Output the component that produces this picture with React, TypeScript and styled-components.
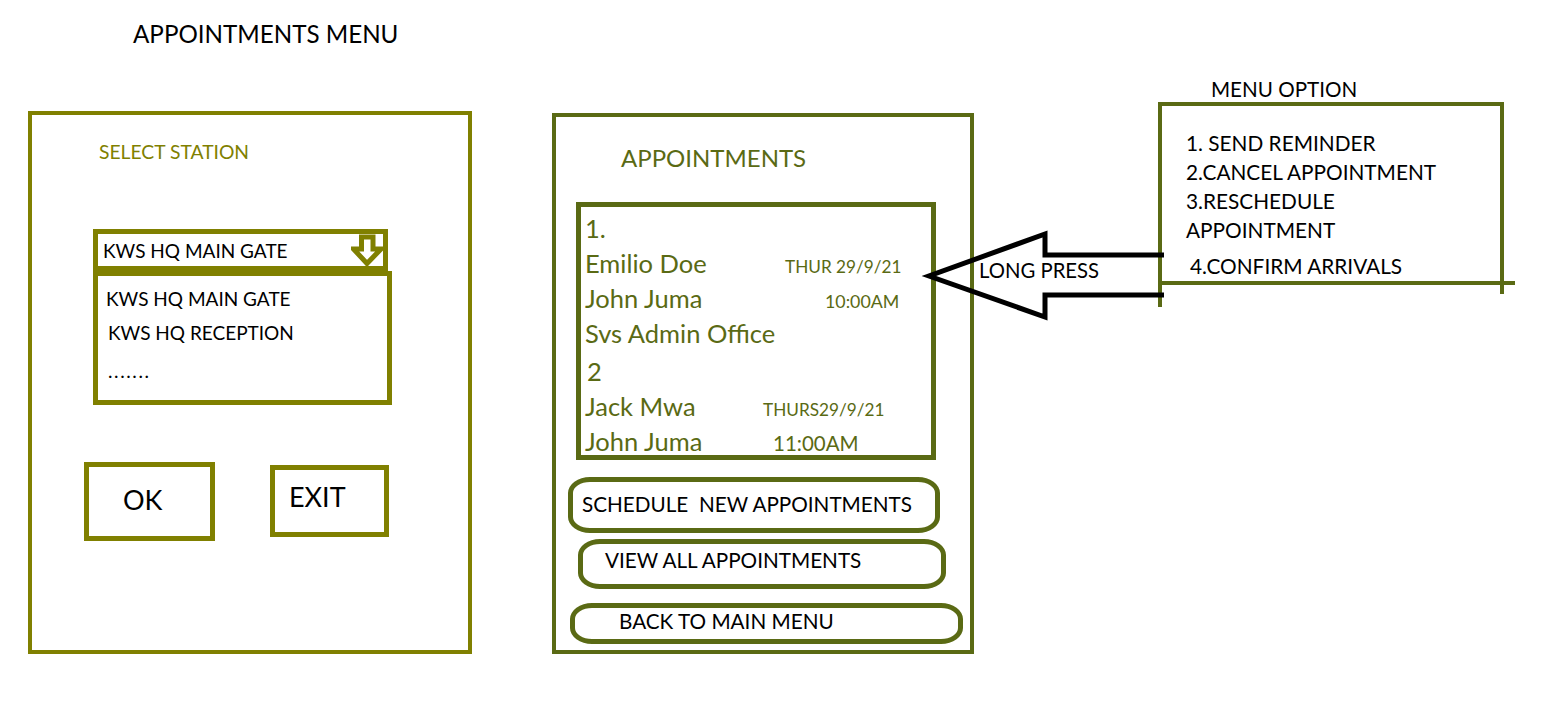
import React from 'react';
import styled, { createGlobalStyle } from 'styled-components';

const OLIVE = '#808000';
const MOSS = '#5a6a14';
const FONT = `"Lato", "Open Sans", "Liberation Sans", sans-serif`;

const Global = createGlobalStyle`
  html, body { margin: 0; padding: 0; background: #ffffff; }
  body { font-family: ${FONT}; color: #000; }
  * { box-sizing: border-box; }
`;

const Page = styled.div`
  width: 1551px;
  height: 714px;
  overflow: hidden;
  display: flex;
  align-items: flex-start;
`;

const LeftColumn = styled.div`
  display: flex;
  flex-direction: column;
  margin-left: 28px;
  padding-top: 19px;
`;

const PageTitle = styled.h1`
  margin: 0 0 0 105px;
  font-size: 24.2px;
  line-height: 30px;
  font-weight: 400;
  white-space: nowrap;
`;

const StationPanel = styled.section`
  margin-top: 62px;
  width: 444px;
  height: 543px;
  border: 4px solid ${OLIVE};
  padding-top: 25px;
  display: flex;
  flex-direction: column;
  align-items: flex-start;
`;

const Caption = styled.div`
  margin-left: 67px;
  font-size: 19.3px;
  line-height: 24px;
  color: ${OLIVE};
  white-space: nowrap;
`;

const Dropdown = styled.div`
  margin: 65px 0 0 61px;
  display: flex;
  flex-direction: column;
  align-items: flex-start;
`;

const SelectBox = styled.div`
  width: 295px;
  height: 42px;
  border: 5px solid ${OLIVE};
  padding-left: 5px;
  display: flex;
  align-items: center;
  justify-content: space-between;
  font-size: 19px;
  white-space: nowrap;
`;

const OptionList = styled.ul`
  list-style: none;
  margin: 0;
  width: 299px;
  height: 134px;
  border: 5px solid ${OLIVE};
  padding: 6px 0 0 8px;
`;

const OptionItem = styled.li<{ $shift?: number; $spread?: number }>`
  font-size: 19px;
  line-height: 34px;
  padding-left: ${(p) => p.$shift ?? 0}px;
  letter-spacing: ${(p) => p.$spread ?? 0}px;
  white-space: nowrap;
`;

const Ellipsis = styled(OptionItem)`
  margin-top: 4px;
`;

const ActionRow = styled.div`
  display: flex;
  align-items: flex-start;
  gap: 55px;
  margin: 57px 0 0 52px;
`;

const SquareButton = styled.button<{ $w: number; $h: number; $top: number; $pad: number; $lift: number }>`
  margin-top: ${(p) => p.$top}px;
  width: ${(p) => p.$w}px;
  height: ${(p) => p.$h}px;
  border: 5px solid ${OLIVE};
  background: #fff;
  padding: 0 0 ${(p) => p.$lift}px ${(p) => p.$pad}px;
  display: flex;
  align-items: center;
  font-family: ${FONT};
  font-size: 27px;
  color: #000;
  cursor: pointer;
`;

const AppointmentsPanel = styled.section`
  margin: 113px 0 0 80px;
  width: 422px;
  height: 541px;
  border: 4px solid ${MOSS};
  padding-top: 26px;
  display: flex;
  flex-direction: column;
  align-items: flex-start;
  color: ${MOSS};
`;

const PanelHeading = styled.h2`
  margin: 0 0 0 65px;
  font-size: 24px;
  line-height: 30px;
  font-weight: 400;
`;

const ListBox = styled.div`
  margin: 29px 0 0 20px;
  width: 360px;
  height: 258px;
  border: 5px solid ${MOSS};
  padding-top: 4px;
`;

const EntryRow = styled.div<{ $split?: number; $gap?: number; $indent?: number }>`
  display: grid;
  grid-template-columns: ${(p) => p.$split ?? 340}px auto;
  align-items: baseline;
  margin-top: ${(p) => p.$gap ?? 0}px;
  padding-left: ${(p) => p.$indent ?? 4}px;
  height: 35px;
  font-size: 25.5px;
  line-height: 35px;
  white-space: nowrap;
`;

const Meta = styled.span<{ $size: number }>`
  font-size: ${(p) => p.$size}px;
`;

const PillButton = styled.button<{ $w: number; $h: number; $left: number; $top: number; $pad: number; $lift: number }>`
  margin: ${(p) => p.$top}px 0 0 ${(p) => p.$left}px;
  width: ${(p) => p.$w}px;
  height: ${(p) => p.$h}px;
  border: 5px solid ${MOSS};
  border-radius: 22px / 16px;
  background: #fff;
  padding: 0 0 ${(p) => p.$lift}px ${(p) => p.$pad}px;
  display: flex;
  align-items: center;
  font-family: ${FONT};
  font-size: 20.7px;
  color: #000;
  white-space: pre;
  cursor: pointer;
`;

const MenuArea = styled.div`
  margin-left: 184px;
  padding-top: 77px;
  display: flex;
  flex-direction: column;
  align-items: flex-start;
`;

const MenuLabel = styled.div`
  margin-left: 53px;
  font-size: 20.6px;
  line-height: 24px;
  white-space: nowrap;
`;

const MenuBox = styled.div`
  position: relative;
  margin-top: 1px;
  width: 346px;
  height: 183px;
  border: 4px solid ${MOSS};
  padding: 22px 0 0 24px;

  &::before {
    content: '';
    position: absolute;
    left: -4px;
    top: 100%;
    width: 4px;
    height: 26px;
    background: ${MOSS};
  }

  &::after {
    content: '';
    position: absolute;
    right: -15px;
    bottom: -4px;
    width: 15px;
    height: 4px;
    background: ${MOSS};
  }
`;

const RightTail = styled.span`
  position: absolute;
  right: -4px;
  top: 100%;
  width: 4px;
  height: 13px;
  background: ${MOSS};
`;

const MenuItem = styled.div<{ $gap?: number; $shift?: number }>`
  margin: ${(p) => p.$gap ?? 0}px 0 0 ${(p) => p.$shift ?? 0}px;
  font-size: 20.8px;
  line-height: 29px;
  white-space: nowrap;
`;

const PressCallout = styled.div`
  position: absolute;
  left: -238px;
  top: 120px;
  width: 245px;
  height: 92px;
  padding: 32px 0 0 55px;
  pointer-events: none;
`;

const CalloutShape = styled.svg`
  position: absolute;
  inset: 0;
  overflow: visible;
`;

const CalloutText = styled.span`
  position: relative;
  display: block;
  font-size: 20.3px;
  line-height: 24px;
  white-space: nowrap;
`;

const DownArrow = () => (
  <svg width="33" height="33" viewBox="0 0 33 33" aria-hidden="true" style={{ marginTop: 1, marginRight: -1 }}>
    <path
      d="M10.5 3 H22 V15 H30 L16 29.5 L2.5 15 H10.5 Z"
      fill="#fff"
      stroke={OLIVE}
      strokeWidth="5"
      strokeLinejoin="miter"
    />
  </svg>
);

export default function App() {
  return (
    <>
      <Global />
      <Page>
        <LeftColumn>
          <PageTitle>APPOINTMENTS MENU</PageTitle>
          <StationPanel>
            <Caption>SELECT STATION</Caption>
            <Dropdown>
              <SelectBox>
                <span>KWS HQ MAIN GATE</span>
                <DownArrow />
              </SelectBox>
              <OptionList>
                <OptionItem>KWS HQ MAIN GATE</OptionItem>
                <OptionItem $shift={2}>KWS HQ RECEPTION</OptionItem>
                <Ellipsis $shift={2} $spread={1.6}>.......</Ellipsis>
              </OptionList>
            </Dropdown>
            <ActionRow>
              <SquareButton $w={131} $h={79} $top={0} $pad={34} $lift={4}>OK</SquareButton>
              <SquareButton $w={119} $h={72} $top={3} $pad={14} $lift={10}>EXIT</SquareButton>
            </ActionRow>
          </StationPanel>
        </LeftColumn>

        <AppointmentsPanel>
          <PanelHeading>APPOINTMENTS</PanelHeading>
          <ListBox>
            <EntryRow>1.</EntryRow>
            <EntryRow $split={200}>
              <span>Emilio Doe</span>
              <Meta $size={17.2}>THUR 29/9/21</Meta>
            </EntryRow>
            <EntryRow $split={240}>
              <span>John Juma</span>
              <Meta $size={17.8}>10:00AM</Meta>
            </EntryRow>
            <EntryRow>Svs Admin Office</EntryRow>
            <EntryRow $gap={3} $indent={6}>2</EntryRow>
            <EntryRow $split={178}>
              <span>Jack Mwa</span>
              <Meta $size={17.2}>THURS29/9/21</Meta>
            </EntryRow>
            <EntryRow $split={188}>
              <span>John Juma</span>
              <Meta $size={20.5}>11:00AM</Meta>
            </EntryRow>
          </ListBox>
          <PillButton $w={372} $h={56} $left={12} $top={17} $pad={9} $lift={2}>SCHEDULE  NEW APPOINTMENTS</PillButton>
          <PillButton $w={368} $h={50} $left={22} $top={6} $pad={22} $lift={8}>VIEW ALL APPOINTMENTS</PillButton>
          <PillButton $w={393} $h={41} $left={14} $top={14} $pad={44} $lift={5}>BACK TO MAIN MENU</PillButton>
        </AppointmentsPanel>

        <MenuArea>
          <MenuLabel>MENU OPTION</MenuLabel>
          <MenuBox>
            <RightTail />
            <MenuItem>1. SEND REMINDER</MenuItem>
            <MenuItem>2.CANCEL APPOINTMENT</MenuItem>
            <MenuItem>3.RESCHEDULE</MenuItem>
            <MenuItem>APPOINTMENT</MenuItem>
            <MenuItem $gap={7} $shift={4}>4.CONFIRM ARRIVALS</MenuItem>
            <PressCallout>
              <CalloutShape width="245" height="92" viewBox="0 0 245 92" aria-hidden="true">
                <polyline
                  points="240,29 121,29 121,8 5,50 121,91 121,69 240,69"
                  fill="none"
                  stroke="#000"
                  strokeWidth="5"
                  strokeLinejoin="miter"
                />
              </CalloutShape>
              <CalloutText>LONG PRESS</CalloutText>
            </PressCallout>
          </MenuBox>
        </MenuArea>
      </Page>
    </>
  );
}
